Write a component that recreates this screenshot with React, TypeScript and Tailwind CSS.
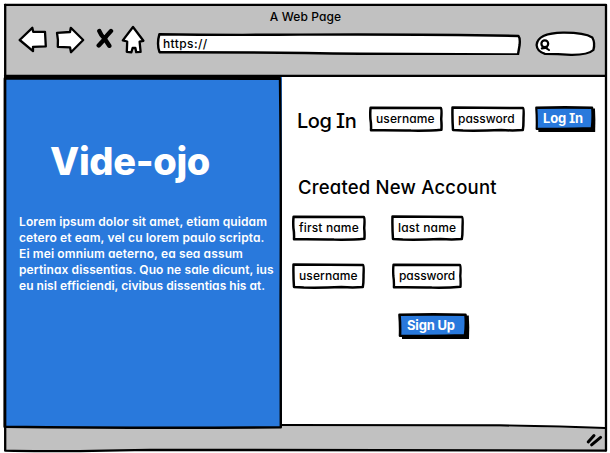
import type { ReactNode } from "react";

const ink = { stroke: "#000", strokeLinejoin: "round", strokeLinecap: "round" } as const;

/* Text field with a hand-drawn outline; the outline stretches to the box. */
function Field({ children, className, alt = false }: { children: ReactNode; className: string; alt?: boolean }) {
  return (
    <div className={`relative flex h-[26px] items-center ${className}`}>
      <svg className="absolute inset-0 h-full w-full" viewBox="0 0 74 26" preserveAspectRatio="none">
        <path
          d={alt
            ? "M1.5 1.6 L72 2 Q73 2.6 72.5 12 Q72.6 20 71.8 24 Q62 24.8 50 24 Q30 25 12 24.6 L2 24 Q1.2 12 1.5 1.6Z"
            : "M1.6 1.7 L71.8 2 Q73 3 72.2 13 Q72.8 19 72.4 23.8 Q60 24.9 42 24.6 Q28 24 2 24.2 Q2.3 18 1.4 13 Q1 6 1.6 1.7Z"}
          fill="#fff" strokeWidth="2.5" {...ink}
        />
      </svg>
      <span className="relative text-[12px] leading-4 font-medium whitespace-nowrap">{children}</span>
    </div>
  );
}

function Button({ children, className }: { children: ReactNode; className: string }) {
  return (
    <div className={`relative flex h-[26px] items-center ${className}`}>
      <svg className="absolute inset-0 h-full w-full" viewBox="0 0 72 26" preserveAspectRatio="none">
        <path d="M4 4 L70.8 2.6 Q71.6 14 71 26 L4 26Z" fill="#000" />
        <path d="M1.5 1.8 Q36 1 67.5 1.8 Q68.4 12 67 22.4 Q34 23.4 2 22.8 Q2.4 12 1.5 1.8Z" fill="#2979dc" strokeWidth="2.6" {...ink} />
      </svg>
      <span className="relative -top-px text-[13px] leading-4 font-bold tracking-[-0.18px] whitespace-nowrap text-white">{children}</span>
    </div>
  );
}

function Toolbar() {
  return (
    <div className="flex h-[30px] pl-[14px]">
      <svg className="h-[30px] w-[29px]" viewBox="18 25 29 30">
        <path d="M19.7 40 L32.3 27.8 L33.2 31.8 L45 31.8 L45.8 46.4 L33 46.8 L33 51.2Z" fill="#fff" strokeWidth="2.3" {...ink} />
      </svg>
      <svg className="ml-2 h-[30px] w-[30px]" viewBox="55 25 30 30">
        <path d="M57 32.8 L70 32 L70.8 27.8 L83.2 40 L71 52.2 L70 47.3 L57.8 46.8 Q58.4 40 57 32.8Z" fill="#fff" strokeWidth="2.3" {...ink} />
      </svg>
      <svg className="ml-[11px] h-[30px] w-[18px]" viewBox="96 25 18 30">
        <path d="M99.3 31 Q101 35.5 104.5 38.5 L109.3 45.8 M111 31 Q106.5 35.5 104.2 39.5 L98.7 45.4" fill="none" strokeWidth="4.4" {...ink} />
      </svg>
      <svg className="ml-[7px] h-[30px] w-[25px]" viewBox="121 25 25 30">
        <path d="M133 27 L143.4 40.8 L139.6 41.6 L140.6 51.8 L136.2 52.2 L135.4 48 L132.6 48 L131.4 52.3 L126.8 51.9 L127.2 41.5 L122.8 40.4Z" fill="#fff" strokeWidth="2.3" {...ink} />
      </svg>
      <div className="relative ml-[10px] flex h-[30px] w-[366px] items-center pt-[7px] pl-[7px]">
        <svg className="absolute inset-0 h-full w-full" viewBox="156 25 366 30">
          <path d="M159.4 34.2 Q220 35.2 300 34.6 Q430 34 518.5 36 Q520.3 38 519.6 45 L518 54.4 Q440 54.2 360 53.8 Q250 52 159.5 52.2 Q156.6 44 159.4 34.2Z" fill="#fff" strokeWidth="2.4" {...ink} />
        </svg>
        <span className="relative text-[12px] leading-4 font-medium tracking-[0.4px]">https://</span>
      </div>
      <svg className="ml-3 h-[32px] w-[63px]" viewBox="534 25 63 32">
        <path d="M536.6 45 Q537.5 33.2 563 32.7 Q584 32.5 592.3 37.5 Q595.4 43 593.4 50 Q588 55 571 54.8 Q558 53.8 545 53.8 Q537 51.5 536.6 45Z" fill="#fff" strokeWidth="2.3" {...ink} />
        <circle cx="544.8" cy="43.8" r="3.4" fill="none" strokeWidth="2.2" {...ink} />
        <path d="M545.4 47.6 L549 50 M541.8 48.4 L546.8 47.6" fill="none" strokeWidth="2.1" {...ink} />
      </svg>
    </div>
  );
}

export default function App() {
  return (
    <div className="relative h-[453px] w-[610px] overflow-hidden bg-white pt-[5px] pr-[4px] pl-[4px] font-['Inter','Noto_Sans',sans-serif] text-black [font-feature-settings:'cv11','cv08']">
      <header className="h-[72px] bg-[#c1c1c1] pt-1">
        <h1 className="pl-px text-center text-[12px] leading-4 font-medium tracking-[0.1px]">A Web Page</h1>
        <Toolbar />
      </header>

      <main className="flex h-[350px]">
        <section className="w-[278px] bg-[#2979dc] pl-[15px] text-white">
          <h2 className="pt-[64px] pl-[31px] text-[38px] leading-[40px] font-extrabold tracking-[-0.35px]">Vide-ojo</h2>
          <div className="pt-[33px] text-[12px] leading-[15.9px] font-semibold whitespace-nowrap">
            <p className="tracking-[0.11px]">Lorem ipsum dolor sit amet, etiam quidam</p>
            <p className="tracking-[0.13px]">cetero et eam, vel cu lorem paulo scripta.</p>
            <p className="tracking-[0.12px]">Ei mei omnium aeterno, ea sea assum</p>
            <p className="tracking-[0.11px]">pertinax dissentias. Quo ne sale dicunt, ius</p>
            <p className="tracking-[0.03px]">eu nisl efficiendi, civibus dissentias his at.</p>
          </div>
        </section>

        <section className="flex-1 pt-[29px] pl-[10px]">
          <div className="flex">
            <h3 className="w-[77px] pt-[3px] pl-[5px] text-[20px] leading-6 font-medium tracking-[-0.5px]">Log In</h3>
            <Field className="w-[74px] pl-[7px] tracking-[0.1px]">username</Field>
            <Field className="ml-[8px] w-[74px] pl-[7px]" alt>password</Field>
            <Button className="ml-[10px] w-[61px] pl-2">Log In</Button>
          </div>

          <h3 className="pt-[42px] pl-[6px] text-[18.5px] leading-6 font-medium tracking-[0.2px]">Created New Account</h3>

          <div className="flex pt-4">
            <Field className="w-[74px] pl-[7px] tracking-[0.15px]">first name</Field>
            <Field className="ml-[25px] w-[73px] pl-[7px] tracking-[0.2px]" alt>last name</Field>
          </div>
          <div className="flex pt-[22px]">
            <Field className="w-[73px] pl-[7px] tracking-[0.1px]" alt>username</Field>
            <Field className="ml-[27px] w-[70px] pl-[7px] tracking-[-0.05px]">password</Field>
          </div>
          <div className="flex pt-[24px] pl-[106px]">
            <Button className="w-[72px] pl-[9px]">Sign Up</Button>
          </div>
        </section>
      </main>

      <footer className="h-[24px] bg-[#c1c1c1]" />

      {/* Hand-drawn window outline, panel border and resize grip */}
      <svg className="pointer-events-none absolute inset-0 h-full w-full" viewBox="0 0 610 453" fill="none">
        <path d="M282 425 L606 425 L606 428.5 L560 427.5 Q520 425.8 470 426 L282 426Z" fill="#fff" />
        <path d="M5 4.8 L606 4.8 Q605.5 200 606 450.4" strokeWidth="2.3" {...ink} />
        <path d="M5.2 5 L5.2 450.7 Q50 452 150 449.8 Q300 450.8 606 450.6" strokeWidth="2.3" {...ink} />
        <path d="M5 75.8 L605 75.8" strokeWidth="2.2" {...ink} />
        <path d="M282 425.2 L500 425.4 Q560 426.2 605 428" strokeWidth="2.2" {...ink} />
        <path d="M5 77.2 L280 77.4" strokeWidth="1.6" {...ink} />
        <path d="M4.8 78.4 L280 78.8 Q281.2 180 280.6 300 L280.8 427.3 Q150 428.4 4.6 426.8 Q5 250 4.8 78.4Z" strokeWidth="2.4" {...ink} />
        <path d="M588.2 442 L594 435.5 M591.6 444.9 L600.6 437.4" strokeWidth="3" {...ink} />
      </svg>
    </div>
  );
}
